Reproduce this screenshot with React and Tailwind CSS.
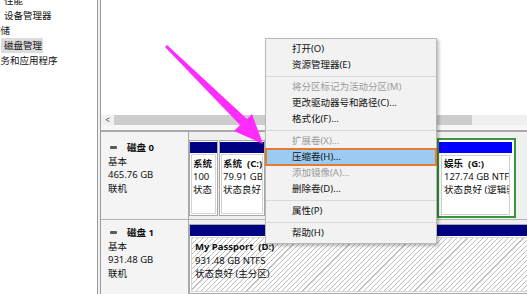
import React from 'react';

const menuItems = [
    { label: '打开(O)' },
    { label: '资源管理器(E)' },
    { sep: true },
    { label: '将分区标记为活动分区(M)', disabled: true },
    { label: '更改驱动器号和路径(C)...' },
    { label: '格式化(F)...' },
    { sep: true },
    { label: '扩展卷(X)...', disabled: true },
    { label: '压缩卷(H)...', active: true },
    { label: '添加镜像(A)...', disabled: true },
    { label: '删除卷(D)...' },
    { sep: true },
    { label: '属性(P)' },
    { sep: true },
    { label: '帮助(H)' },
];

const DiskLabel = ({ name, size, className }) => (
    <div className={`w-[88px] shrink-0 border-r border-[#a8a8a8] bg-[#f4f4f4] pl-[7px] leading-[13.5px] ${className}`}>
        <div className="flex items-center">
            <span className="ml-[2px] mr-[10px] h-[3px] w-[7px] rounded-[1px] bg-[#5a5a5a]" />
            <span className="font-bold">{name}</span>
        </div>
        <div>基本</div>
        <div>{size}</div>
        <div>联机</div>
    </div>
);

const Partition = ({ width, lines }) => (
    <div className={`${width} my-[2px] flex shrink-0 flex-col overflow-hidden border border-[#a8a8a8] bg-white pt-[1px]`}>
        <div className="h-[11px] bg-[#000082]" />
        <div className="m-[1px] min-w-0 flex-1 overflow-hidden whitespace-pre border border-[#d4d4d4] px-[1px] pt-[2px] leading-[13px]">
            {lines.map((l, i) => (
                <div key={i} className={i === 0 ? 'font-bold' : ''}>{l}</div>
            ))}
        </div>
    </div>
);

const App = () => {
    return (
        <div className="relative flex h-[294px] w-[527px] overflow-hidden bg-white font-['Noto_Sans','Noto_Sans_CJK_SC',sans-serif] text-[9.5px] text-[#111]">
            {/* tree */}
            <div className="w-[97px] shrink-0 overflow-hidden leading-[15px]">
                <div className="mt-[-7px] flex flex-col whitespace-nowrap">
                    <div className="h-[15px] pl-[4px]">性能</div>
                    <div className="h-[15px] pl-[4px]">设备管理器</div>
                    <div className="ml-[-9px] h-[15px]">存储</div>
                    <div className="h-[15px]">
                        <span className="ml-[1px] inline-block bg-[#dcdcdc] pl-[3px] pr-[1px]">磁盘管理</span>
                    </div>
                    <div className="ml-[-9px] h-[15px]">服务和应用程序</div>
                </div>
            </div>
            <div className="w-[4px] shrink-0 border-x border-[#9c9c9c] bg-[#f0f0f0]" />

            {/* right pane */}
            <div className="flex min-w-0 flex-1 flex-col">
                <div className="h-[115px] shrink-0 bg-white" />
                <div className="flex h-[10px] shrink-0 items-stretch bg-[#f0f0f0]">
                    <div className="flex w-[13px] items-center justify-center text-[8px] leading-none text-[#444]">&lt;</div>
                    <div className="w-[358px] bg-[#cdcdcd]" />
                </div>
                <div className="h-[5px] shrink-0 bg-[#f7f7f7]" />
                <div className="h-[2px] shrink-0 bg-[#a9a9a9]" />

                <div className="flex flex-1 flex-col bg-[#f0f0f0]">
                    {/* disk 0 */}
                    <div className="flex h-[88px] shrink-0 border-b border-[#b4b4b4]">
                        <DiskLabel name="磁盘 0" size="465.76 GB" className="pt-[9px]" />
                        <div className="flex min-w-0 flex-1 gap-[1px] overflow-hidden pb-[1px] pt-[6px]">
                            <Partition width="w-[29px]" lines={['系统', '100', '状态']} />
                            <Partition width="w-[46px]" lines={['系统  (C:)', '79.91 GB', '状态良好 (']} />
                            <Partition width="w-[170px]" lines={[]} />
                            <div className="flex w-[79px] shrink-0 overflow-hidden border-2 border-[#37973a] bg-white pb-[1px] pr-[2px] pt-[2px]">
                                <div className="flex min-w-0 flex-1 flex-col">
                                    <div className="h-[11px] bg-[#0000ff]" />
                                    <div className="mx-[2px] mt-[2px] min-w-0 flex-1 overflow-hidden whitespace-pre border border-[#cfcfcf] px-[2px] pt-[1px] leading-[13px]">
                                        <div className="font-bold">娱乐  (G:)</div>
                                        <div>127.74 GB NTFS</div>
                                        <div>状态良好 (逻辑驱动器)</div>
                                    </div>
                                </div>
                            </div>
                        </div>
                    </div>

                    {/* disk 1 */}
                    <div className="flex flex-1">
                        <DiskLabel name="磁盘 1" size="931.48 GB" className="pt-[6px]" />
                        <div className="flex min-w-0 flex-1 pt-[4px]">
                            <div className="mr-[-4px] flex flex-1 flex-col border border-[#a8a8a8] bg-white">
                                <div className="h-[11px] shrink-0 bg-[#000082]" />
                                <div className="m-[1px] flex-1 whitespace-pre border border-[#d4d4d4] bg-[repeating-linear-gradient(135deg,#bdbdbd_0px,#bdbdbd_0.8px,#ffffff_0.8px,#ffffff_3.6px)] px-[3px] pt-[2px] leading-[13.5px]">
                                    <div className="font-bold">My Passport  (D:)</div>
                                    <div>931.48 GB NTFS</div>
                                    <div>状态良好 (主分区)</div>
                                </div>
                            </div>
                        </div>
                    </div>
                </div>
            </div>

            {/* context menu */}
            <div className="absolute left-[265px] top-[38px] w-[172px] border border-[#b8b8b8] bg-[#f2f2f2] py-[2px] shadow-[2px_2px_3px_rgba(0,0,0,0.25)]">
                {menuItems.map((item, i) =>
                    item.sep ? (
                        <div key={i} className="flex h-[6px] items-center">
                            <div className="h-[1px] w-full bg-[#d9d9d9]" />
                        </div>
                    ) : (
                        <div
                            key={i}
                            className={`h-[16px] whitespace-nowrap pl-[26px] leading-[16px] ${item.disabled ? 'text-[#9a9a9a]' : 'text-[#111]'} ${item.active ? 'bg-[#9accf3] outline-2 -outline-offset-1 outline-[#e9792c]' : ''}`}
                        >
                            {item.label}
                        </div>
                    )
                )}
            </div>

            {/* annotation arrow */}
            <svg className="pointer-events-none absolute left-0 top-0" width="527" height="294" viewBox="0 0 527 294">
                <polygon points="165,47 167,45 247,119 252,114 263,144 234,131 240,125" fill="#ff2bff" />
            </svg>
        </div>
    );
};

export default App;
